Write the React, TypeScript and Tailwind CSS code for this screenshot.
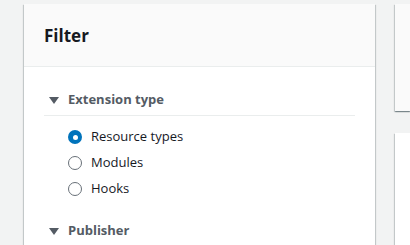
import React from "react";

const Caret = () => (
  <svg width="10" height="7" viewBox="0 0 10 7" className="shrink-0">
    <path d="M0 0 L10 0 L5 7 Z" fill="#545b64" />
  </svg>
);

const Radio = ({ checked }: { checked?: boolean }) =>
  checked ? (
    <span className="w-[14px] h-[14px] rounded-full bg-[#0073bb] flex items-center justify-center shrink-0">
      <span className="w-[5px] h-[5px] rounded-full bg-white" />
    </span>
  ) : (
    <span className="w-[14px] h-[14px] rounded-full border-[1.5px] border-[#687078] bg-white shrink-0" />
  );

const shadow =
  "shadow-[0_1px_1px_0_rgba(0,28,36,0.3),1px_1px_1px_0_rgba(0,28,36,0.15),-1px_1px_1px_0_rgba(0,28,36,0.15)]";

export default function App() {
  const items = [
    { label: "Resource types", checked: true },
    { label: "Modules" },
    { label: "Hooks" },
  ];
  return (
    <div
      className="w-[410px] h-[245px] overflow-hidden bg-[#f2f3f3] flex pl-[24px] pt-[4px] gap-[20px]"
      style={{ fontFamily: '"Open Sans", Roboto, Arial, sans-serif' }}
    >
      <div className={`w-[351px] shrink-0 bg-white h-[260px] ${shadow}`}>
        <div className="h-[63px] bg-[#fafafa] border-b border-[#eaeded] flex items-center pl-[20px]">
          <span className="text-[17px] font-bold text-[#16191f] leading-none">Filter</span>
        </div>
        <div className="px-[20px] pt-[20px]">
          <div className="flex items-center gap-[9px] h-[26px] pl-[5px] border-b border-[#eaeded] pb-[2px] box-content">
            <Caret />
            <span className="text-[13px] font-bold text-[#545b64]">Extension type</span>
          </div>
          <div className="pt-[8px] pl-[24px] flex flex-col">
            {items.map((it) => (
              <div key={it.label} className="flex items-center gap-[9px] h-[26px]">
                <Radio checked={it.checked} />
                <span className="text-[13px] text-[#16191f]">{it.label}</span>
              </div>
            ))}
          </div>
          <div className="flex items-center gap-[9px] h-[26px] pl-[5px] mt-[16px]">
            <Caret />
            <span className="text-[13px] font-bold text-[#545b64]">Publisher</span>
          </div>
        </div>
      </div>
      <div className="flex flex-col gap-[22px] flex-1">
        <div className={`h-[107px] shrink-0 bg-[#fafafa] ${shadow}`} />
        <div className={`h-[200px] shrink-0 bg-white ${shadow}`} />
      </div>
    </div>
  );
}
